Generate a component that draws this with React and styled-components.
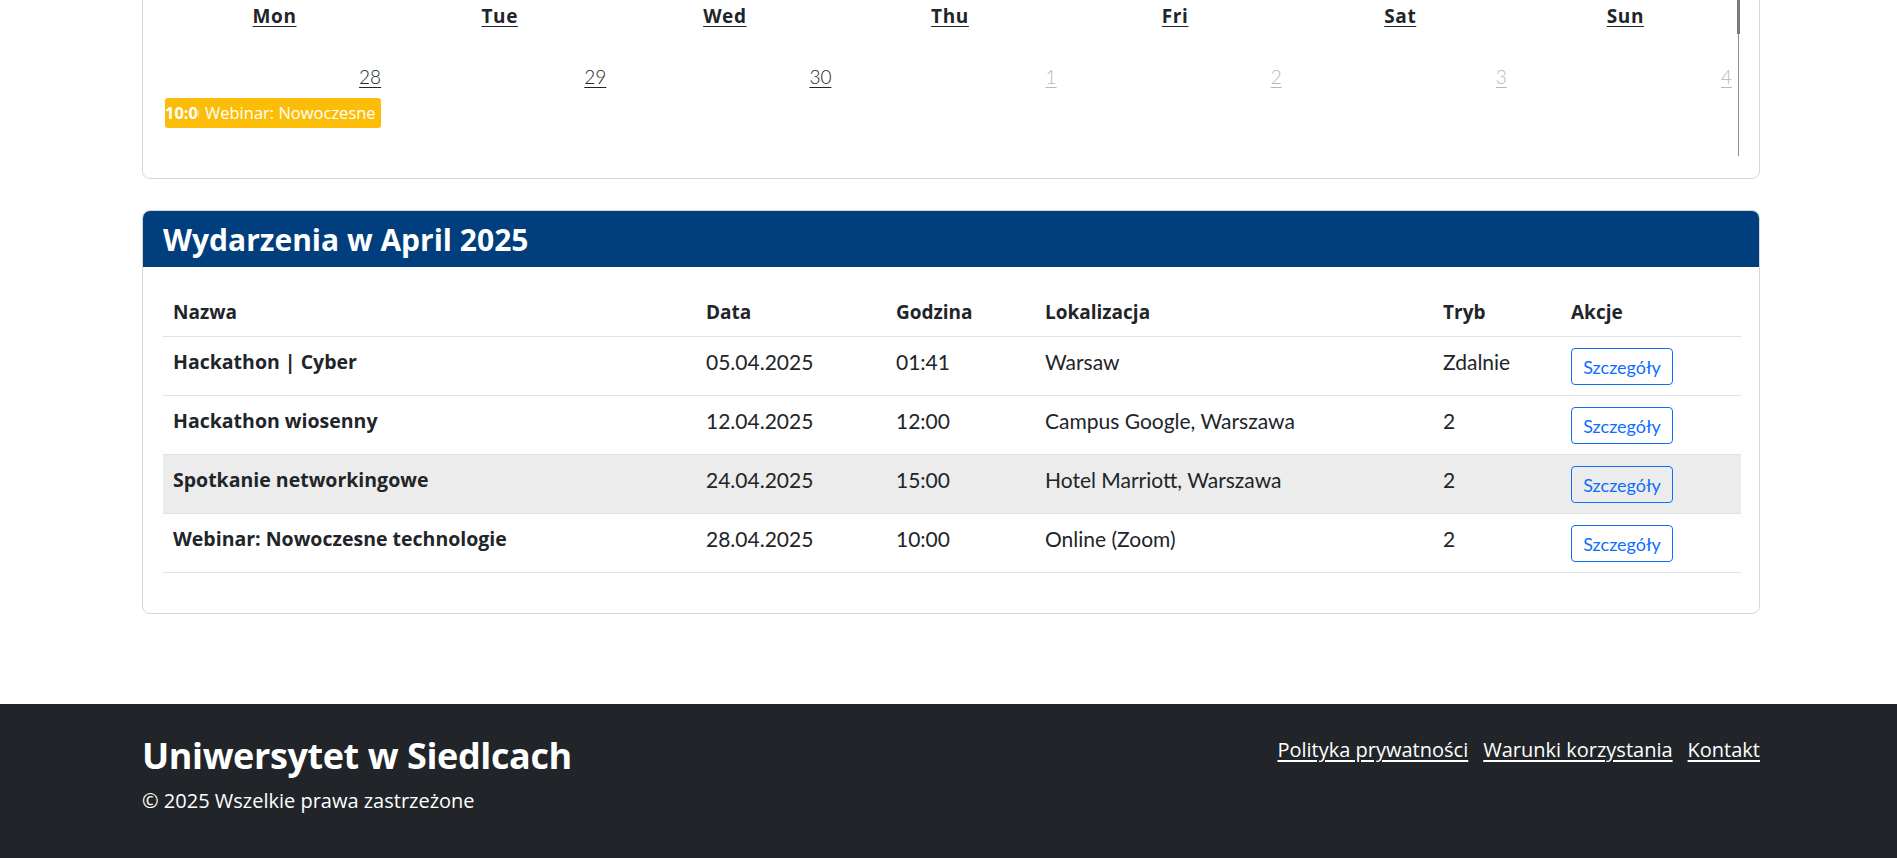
import React from 'react';
import styled, { createGlobalStyle } from 'styled-components';

const GlobalStyle = createGlobalStyle`
    html, body {
        margin: 0;
        padding: 0;
        background: #ffffff;
        font-family: "Lato", "Noto Sans", sans-serif;
        color: #212529;
        overflow: hidden;
    }
`;

const headingFont = `"Open Sans", "Noto Sans", sans-serif`;

const weekDays = ['Mon', 'Tue', 'Wed', 'Thu', 'Fri', 'Sat', 'Sun'];

const days = [
    { num: 28, current: true, event: { time: '10:00', title: 'Webinar: Nowoczesne technologie' } },
    { num: 29, current: true },
    { num: 30, current: true },
    { num: 1, current: false },
    { num: 2, current: false },
    { num: 3, current: false },
    { num: 4, current: false },
];

const events = [
    { name: 'Hackathon | Cyber', date: '05.04.2025', time: '01:41', place: 'Warsaw', mode: 'Zdalnie' },
    { name: 'Hackathon wiosenny', date: '12.04.2025', time: '12:00', place: 'Campus Google, Warszawa', mode: '2' },
    { name: 'Spotkanie networkingowe', date: '24.04.2025', time: '15:00', place: 'Hotel Marriott, Warszawa', mode: '2', hover: true },
    { name: 'Webinar: Nowoczesne technologie', date: '28.04.2025', time: '10:00', place: 'Online (Zoom)', mode: '2' },
];

const columns = [
    { label: 'Nazwa', width: 533 },
    { label: 'Data', width: 190 },
    { label: 'Godzina', width: 149 },
    { label: 'Lokalizacja', width: 398 },
    { label: 'Tryb', width: 128 },
    { label: 'Akcje', width: 180 },
];

export default function App() {
    return (
        <>
            <GlobalStyle />
            <Main>
                <CalendarCard>
                    <CalendarScroller>
                        <ScrollThumb />
                        <WeekHeader>
                            {weekDays.map((d) => (
                                <WeekDay key={d}>{d}</WeekDay>
                            ))}
                        </WeekHeader>
                        <WeekRow>
                            {days.map((d) => (
                                <DayCell key={d.num}>
                                    <DayNumber $muted={!d.current}>{d.num}</DayNumber>
                                    {d.event && (
                                        <EventBadge>
                                            <EventTime>{d.event.time}</EventTime>
                                            <EventTitle>{d.event.title}</EventTitle>
                                        </EventBadge>
                                    )}
                                </DayCell>
                            ))}
                        </WeekRow>
                    </CalendarScroller>
                </CalendarCard>

                <EventsCard>
                    <EventsHeader>
                        <EventsTitle>Wydarzenia w April 2025</EventsTitle>
                    </EventsHeader>
                    <EventsBody>
                        <Table>
                            <colgroup>
                                {columns.map((c) => (
                                    <col key={c.label} style={{ width: c.width }} />
                                ))}
                            </colgroup>
                            <thead>
                                <tr>
                                    {columns.map((c) => (
                                        <Th key={c.label}>{c.label}</Th>
                                    ))}
                                </tr>
                            </thead>
                            <tbody>
                                {events.map((e) => (
                                    <Row key={e.name} $hover={e.hover}>
                                        <Td $bold>{e.name}</Td>
                                        <Td>{e.date}</Td>
                                        <Td>{e.time}</Td>
                                        <Td>{e.place}</Td>
                                        <Td>{e.mode}</Td>
                                        <Td>
                                            <DetailsButton>Szczegóły</DetailsButton>
                                        </Td>
                                    </Row>
                                ))}
                            </tbody>
                        </Table>
                    </EventsBody>
                </EventsCard>
            </Main>

            <Footer>
                <FooterInner>
                    <div>
                        <FooterTitle>Uniwersytet w Siedlcach</FooterTitle>
                        <Copyright>© 2025 Wszelkie prawa zastrzeżone</Copyright>
                    </div>
                    <FooterLinks>
                        <FooterLink href="#">Polityka prywatności</FooterLink>
                        <FooterLink href="#">Warunki korzystania</FooterLink>
                        <FooterLink href="#">Kontakt</FooterLink>
                    </FooterLinks>
                </FooterInner>
            </Footer>
        </>
    );
}

const Main = styled.main`
    padding: 0 137px 0 142px;
`;

const CalendarCard = styled.section`
    margin-top: -22px;
    padding: 20px 20px 22px 19px;
    border: 1px solid #d6d6d6;
    border-radius: 8px;
    background: #fff;
`;

const CalendarScroller = styled.div`
    position: relative;
    border-right: 1px solid #8c8c8c;
`;

const ScrollThumb = styled.div`
    position: absolute;
    top: 0;
    right: -2px;
    width: 3px;
    height: 35px;
    background: #7a7a7a;
`;

const WeekHeader = styled.div`
    display: grid;
    grid-template-columns: repeat(7, 1fr);
    height: 33px;
    align-items: center;
`;

const WeekDay = styled.a`
    justify-self: center;
    font-family: ${headingFont};
    font-size: 19px;
    font-weight: 700;
    letter-spacing: 0.6px;
    color: #212529;
    text-decoration: underline;
    text-underline-offset: 3px;
`;

const WeekRow = styled.div`
    display: grid;
    grid-template-columns: repeat(7, 1fr);
    height: 124px;
`;

const DayCell = styled.div`
    display: flex;
    flex-direction: column;
    align-items: stretch;
    padding: 31px 6px 0 3px;
    min-width: 0;
`;

const DayNumber = styled.a`
    align-self: flex-end;
    font-size: 19px;
    line-height: 27px;
    color: ${(p) => (p.$muted ? '#b8b8b8' : '#212529')};
    text-decoration: underline;
    text-underline-offset: 3px;
    font-weight: 300;
`;

const EventBadge = styled.div`
    display: flex;
    gap: 6px;
    margin-top: 8px;
    height: 30px;
    background: #fbbd08;
    border-radius: 3px;
    overflow: hidden;
    color: #fff;
    font-family: ${headingFont};
    font-size: 16.5px;
    line-height: 30px;
`;

const EventTime = styled.span`
    flex: 0 0 34px;
    overflow: hidden;
    white-space: nowrap;
    font-weight: 700;
`;

const EventTitle = styled.span`
    flex: 1;
    height: 30px;
    overflow: hidden;
`;

const EventsCard = styled.section`
    margin-top: 31px;
    border: 1px solid #d6d6d6;
    border-radius: 8px;
    overflow: hidden;
`;

const EventsHeader = styled.div`
    display: flex;
    align-items: center;
    height: 56px;
    padding: 0 20px;
    background: #003e7e;
`;

const EventsTitle = styled.h2`
    margin: 0;
    color: #fff;
    font-family: ${headingFont};
    font-size: 30px;
    font-weight: 700;
`;

const EventsBody = styled.div`
    padding: 20px;
`;

const Table = styled.table`
    width: 100%;
    table-layout: fixed;
    border-collapse: collapse;
    margin-bottom: 20px;
    font-size: 21px;
`;

const Th = styled.th`
    text-align: left;
    padding: 11px 10px 10px;
    line-height: 28px;
    font-family: ${headingFont};
    font-size: 19px;
    font-weight: 700;
    border-bottom: 1px solid #dee2e6;
`;

const Row = styled.tr`
    background: ${(p) => (p.$hover ? '#ececec' : 'transparent')};
`;

const Td = styled.td`
    padding: 11px 10px 10px;
    line-height: 28px;
    vertical-align: top;
    font-family: ${(p) => (p.$bold ? headingFont : 'inherit')};
    font-size: ${(p) => (p.$bold ? '19.5px' : '21px')};
    font-weight: ${(p) => (p.$bold ? 700 : 400)};
    border-bottom: 1px solid #dee2e6;
    white-space: nowrap;
`;

const DetailsButton = styled.button`
    display: block;
    width: 102px;
    height: 37px;
    padding: 0;
    border: 1px solid #0d6efd;
    border-radius: 4px;
    background: transparent;
    color: #0d6efd;
    font-family: inherit;
    font-size: 18px;
    cursor: pointer;
`;

const Footer = styled.footer`
    margin-top: 90px;
    background: #212529;
    color: #fff;
    padding: 32px 0 60px;
`;

const FooterInner = styled.div`
    display: flex;
    justify-content: space-between;
    align-items: flex-start;
    padding: 0 137px 0 142px;
    font-family: ${headingFont};
`;

const FooterTitle = styled.h3`
    margin: 0 0 10px;
    font-size: 36px;
    line-height: 40px;
    font-weight: 700;
    letter-spacing: -0.4px;
`;

const Copyright = styled.p`
    margin: 0;
    font-size: 20px;
    line-height: 30px;
`;

const FooterLinks = styled.nav`
    display: flex;
    gap: 15px;
    margin-top: 0;
`;

const FooterLink = styled.a`
    color: #fff;
    font-size: 20px;
    line-height: 28px;
    text-decoration: underline;
    text-underline-offset: 3px;
`;
